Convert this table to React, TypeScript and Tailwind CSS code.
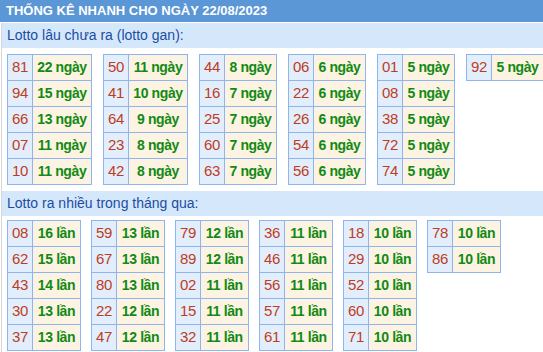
const gan: [string, number][][] = [
  [["81", 22], ["94", 15], ["66", 13], ["07", 11], ["10", 11]],
  [["50", 11], ["41", 10], ["64", 9], ["23", 8], ["42", 8]],
  [["44", 8], ["16", 7], ["25", 7], ["60", 7], ["63", 7]],
  [["06", 6], ["22", 6], ["26", 6], ["54", 6], ["56", 6]],
  [["01", 5], ["08", 5], ["38", 5], ["72", 5], ["74", 5]],
  [["92", 5]],
];

const ganWidths = ["w-[59px]", "w-[59px]", "w-[52px]", "w-[52px]", "w-[52px]", "w-[52px]"];

const nhieu: [string, number][][] = [
  [["08", 16], ["62", 15], ["43", 14], ["30", 13], ["37", 13]],
  [["59", 13], ["67", 13], ["80", 13], ["22", 12], ["47", 12]],
  [["79", 12], ["89", 12], ["02", 11], ["15", 11], ["32", 11]],
  [["36", 11], ["46", 11], ["56", 11], ["57", 11], ["61", 11]],
  [["18", 10], ["29", 10], ["52", 10], ["60", 10], ["71", 10]],
  [["78", 10], ["86", 10]],
];

function NumTable({ rows, unit, valueW }: { rows: [string, number][]; unit: string; valueW: string }) {
  return (
    <div className="shrink-0 border-l border-t border-[#8fb5ef]">
      {rows.map(([num, count]) => (
        <div key={num} className="flex h-[26px]">
          <div className="w-[25px] flex items-center justify-center bg-[#e3eefd] border-r border-b border-[#8fb5ef] text-[#bd3d22] text-[15px] tracking-[-0.3px]">
            {num}
          </div>
          <div className={`${valueW} flex items-center justify-center bg-[#fdf3e3] border-r border-b border-[#8fb5ef] text-[#118a14] font-bold text-[14px] tracking-[-0.4px]`}>
            {count} {unit}
          </div>
        </div>
      ))}
    </div>
  );
}

export default function App() {
  return (
    <div className="w-[543px] h-[352px] overflow-hidden bg-white text-[13px]" style={{ fontFamily: '"Liberation Sans", Arial, sans-serif' }}>
      {/* Title */}
      <div className="h-[22px] bg-[#5b96d6] text-white font-bold text-[13px] flex items-center px-[6px]">
        THỐNG KÊ NHANH CHO NGÀY 22/08/2023
      </div>

      <div className="mt-[1px] ml-[1px] border-l border-[#d6d6d6] pb-2">
        {/* Lotto gan */}
        <div className="h-[25px] bg-[#d5e8fb] text-[#1b4da3] text-[14px] flex items-center px-[5px]">
          Lotto lâu chưa ra (lotto gan):
        </div>
        <div className="flex items-start gap-[11px] mt-[6px] ml-[5px]">
          {gan.map((rows, i) => (
            <NumTable key={i} rows={rows} unit="ngày" valueW={ganWidths[i]} />
          ))}
        </div>

        {/* Lotto ra nhiều */}
        <div className="h-[25px] bg-[#d5e8fb] text-[#1b4da3] text-[14px] flex items-center px-[5px] mt-[6px]">
          Lotto ra nhiều trong tháng qua:
        </div>
        <div className="flex items-start gap-[10px] mt-[4px] ml-[5px]">
          {nhieu.map((rows, i) => (
            <NumTable key={i} rows={rows} unit="lần" valueW="w-[48px]" />
          ))}
        </div>
      </div>
    </div>
  );
}
